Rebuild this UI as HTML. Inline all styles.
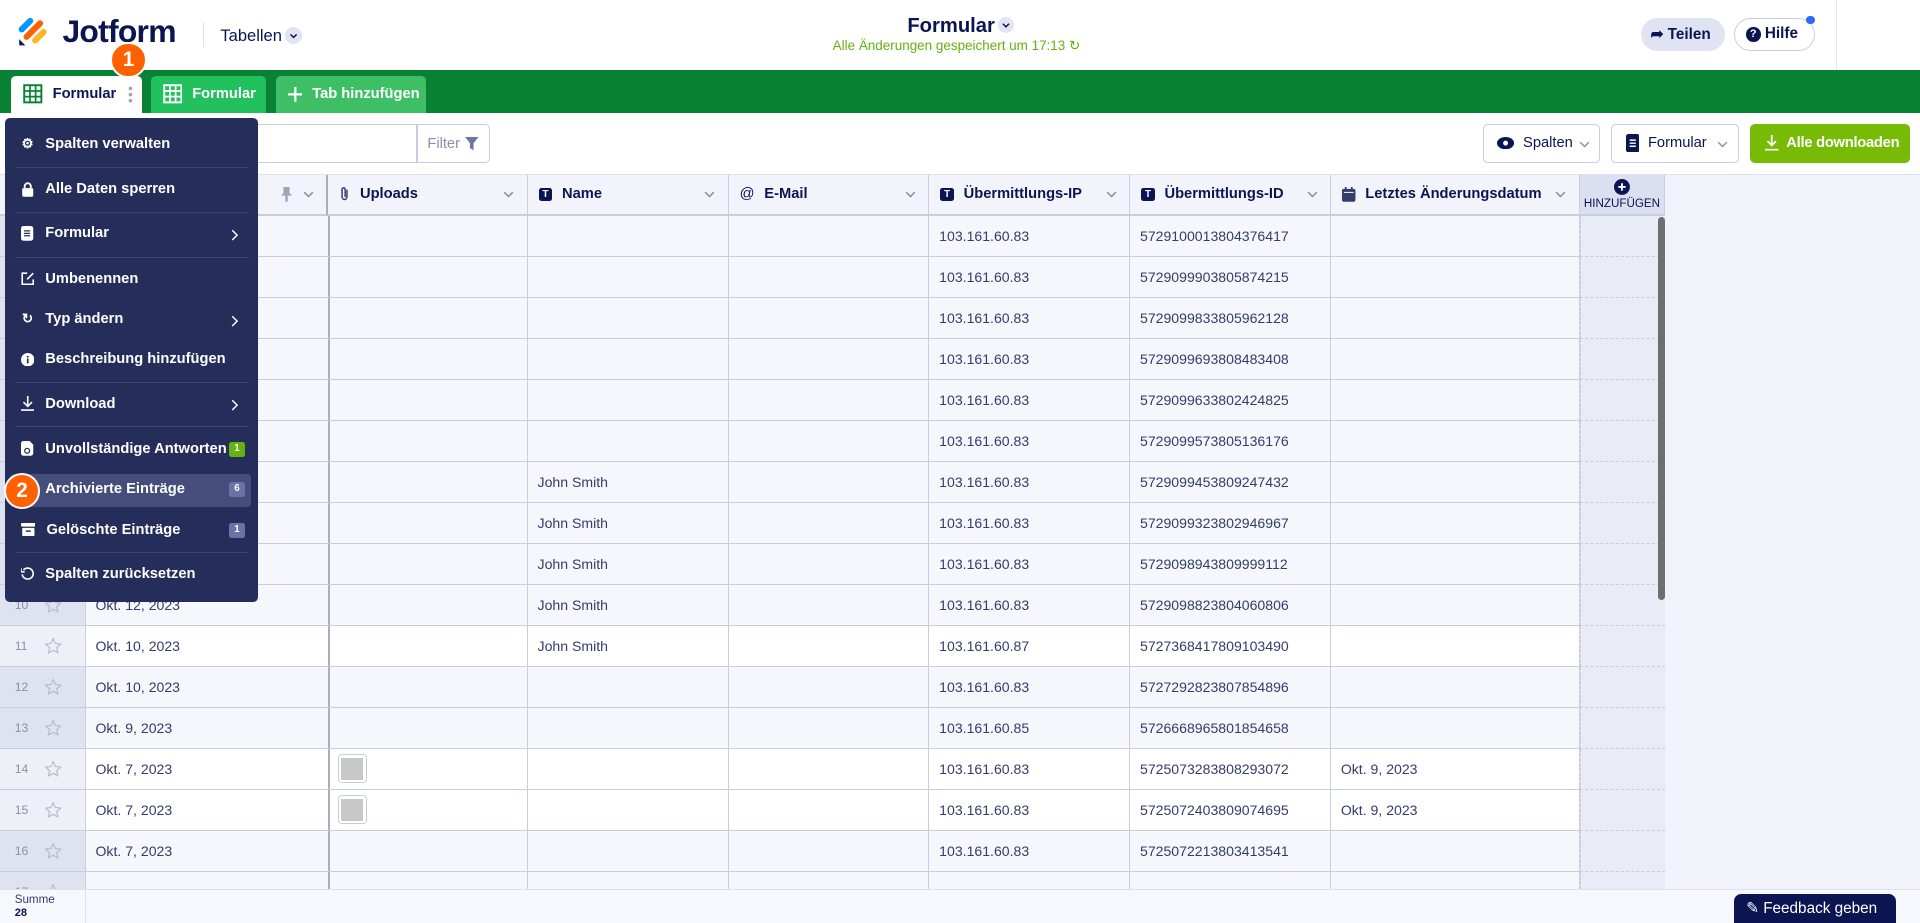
<!DOCTYPE html>
<html><head><meta charset="utf-8"><style>
*{box-sizing:border-box;margin:0;padding:0}
html,body{width:1920px;height:923px;overflow:hidden;background:#fff}
#w{zoom:1.2245;width:1568px;height:754px;position:relative;font-family:"Liberation Sans",sans-serif;color:#0a1551;overflow:hidden}
.a{position:absolute}
.hdr{left:0;top:0;width:1568px;height:57px;background:#fff}
.green{left:0;top:57px;width:1568px;height:35px;background:#0a8236}
.tab{top:62px;height:30px;border-radius:4px 4px 0 0;font-size:12px;font-weight:bold;display:flex;align-items:center;padding-left:10px;gap:8px;white-space:nowrap}
.tb{top:92px;left:0;width:1568px;height:51px;background:#fff;border-bottom:1px solid #dfe2ee}
.btn{top:101px;height:32px;border:1px solid #c8cce0;border-radius:4px;background:#fff;display:flex;align-items:center;font-size:12px;gap:7px;padding-left:11px;white-space:nowrap}
.grid{left:0;top:143px;width:1568px;height:583px;background:#f1f2fa}
.th{position:absolute;top:143px;height:33px;background:#f3f4fb;border-right:1px solid #c9cede;border-bottom:2px solid #c9cede;font-size:12px;font-weight:bold;display:flex;align-items:center;padding-left:9px;gap:8px;white-space:nowrap}
.th .cv{position:absolute;right:10px;top:13px}
.row{position:absolute;left:0;width:1290px;height:33.5px;border-bottom:1px solid #c9cede}
.c{position:absolute;top:0;height:100%;border-right:1px solid #c9cede;font-size:11.5px;color:#343c6a;display:flex;align-items:center;padding-left:8px}
.menu{left:4px;top:96px;width:207px;height:396px;background:#252d5b;border-radius:4px;color:#fff}
.mi{position:absolute;left:13px;font-size:12px;font-weight:bold;display:flex;align-items:center;gap:9px;white-space:nowrap}
.sep{position:absolute;left:8px;width:191px;height:1px;background:#3d4573}
.arr{position:absolute;right:16px}
.bdg{position:absolute;right:11px;width:13px;height:12px;border-radius:2px;font-size:8px;font-weight:bold;text-align:center;line-height:12px;background:#6b72a6}
.num{border-radius:50%;background:#ff6100;color:#fff;border:2px solid #fff;font-weight:bold;text-align:center}
.ic{width:11px;text-align:center;font-size:11px}
</style></head><body><div id="w">
<div class="a hdr"></div>
<svg class="a" style="left:15px;top:13px" width="26" height="26" viewBox="0 0 26 26">
<line x1="3" y1="11" x2="10" y2="4" stroke="#0099ff" stroke-width="5" stroke-linecap="round"/>
<line x1="7" y1="17" x2="18" y2="6" stroke="#ff6100" stroke-width="5" stroke-linecap="round"/>
<line x1="14" y1="20" x2="21" y2="13" stroke="#ffb629" stroke-width="5" stroke-linecap="round"/>
<path d="M1 19 L6 24 L1 24Z" fill="#0a1551"/></svg>
<div class="a" style="left:51px;top:11px;font-size:26px;font-weight:bold;letter-spacing:-0.6px">Jotform</div>
<div class="a" style="left:166px;top:18px;width:1px;height:20px;background:#dfe2ee"></div>
<div class="a" style="left:180px;top:21px;font-size:13.5px">Tabellen</div>
<svg class="a" style="left:233px;top:22px" width="14" height="14"><circle cx="7" cy="7" r="7" fill="#e2e4f2"/><path d="M4.5 6L7 8.5 9.5 6" fill="none" stroke="#0a1551" stroke-width="1.2"/></svg>
<div class="a" style="left:741px;top:12px;font-size:16.5px;font-weight:bold">Formular</div>
<svg class="a" style="left:815px;top:14px" width="13" height="13"><circle cx="6.5" cy="6.5" r="6.5" fill="#e2e4f2"/><path d="M4 5.5L6.5 8 9 5.5" fill="none" stroke="#0a1551" stroke-width="1.2"/></svg>
<div class="a" style="left:680px;top:31px;font-size:11px;color:#64b20f">Alle Änderungen gespeichert um 17:13 ↻</div>
<div class="a" style="left:1340px;top:15px;width:69px;height:27px;border-radius:14px;background:#dfe3f2;font-size:12.5px;font-weight:bold;line-height:27px;padding-left:8px">➦ Teilen</div>
<div class="a" style="left:1416px;top:15px;width:66px;height:27px;border-radius:14px;border:1px solid #c8cce0;font-size:12.5px;font-weight:bold;line-height:25px;padding-left:9px"><span style="display:inline-block;width:12px;height:12px;border-radius:50%;background:#0a1551;color:#fff;font-size:9px;text-align:center;line-height:12px;vertical-align:1px">?</span> Hilfe</div>
<div class="a" style="left:1475px;top:13px;width:7px;height:7px;border-radius:50%;background:#2e69ff"></div>
<div class="a" style="left:1499px;top:0;width:1px;height:57px;background:#e3e5ef"></div>

<div class="a green"></div>
<div class="a tab" style="left:9px;width:107px;background:#fff;color:#0a1551"><svg width="16" height="16"><rect x="1" y="1" width="14" height="14" fill="none" stroke="#0a8236" stroke-width="1.6"/><path d="M1 5.7H15M1 10.3H15M5.7 1V15M10.3 1V15" stroke="#0a8236" stroke-width="1.4"/></svg>Formular<svg width="4" height="14" style="margin-left:2px"><circle cx="2" cy="2" r="1.5" fill="#a0a4b8"/><circle cx="2" cy="7" r="1.5" fill="#a0a4b8"/><circle cx="2" cy="12" r="1.5" fill="#a0a4b8"/></svg></div>
<div class="a tab" style="left:123px;width:94px;background:#22c15e;color:#fff"><svg width="16" height="16"><rect x="1" y="1" width="14" height="14" fill="none" stroke="#fff" stroke-width="1.6"/><path d="M1 5.7H15M1 10.3H15M5.7 1V15M10.3 1V15" stroke="#fff" stroke-width="1.4"/></svg>Formular</div>
<div class="a tab" style="left:225px;width:123px;background:#3ebf66;color:#fff"><svg width="12" height="12"><path d="M6 0V12M0 6H12" stroke="#fff" stroke-width="1.8"/></svg>Tab hinzufügen</div>
<div class="a num" style="left:90px;top:34px;width:30px;height:30px;font-size:17px;line-height:26px">1</div>

<div class="a tb"></div>
<div class="a" style="left:200px;top:101px;width:200px;height:32px;border:1px solid #c8cce0;border-radius:4px"></div>
<div class="a" style="left:340px;top:101px;width:1px;height:32px;background:#c8cce0"></div>
<div class="a" style="left:349px;top:111px;font-size:12px;color:#8b90a8">Filter</div>
<svg class="a" style="left:380px;top:112px" width="11" height="11"><path d="M0 0H11L7 5V11L4 9V5Z" fill="#6f76a7"/></svg>
<div class="a btn" style="left:1211px;width:96px"><svg width="14" height="10"><ellipse cx="7" cy="5" rx="7" ry="5" fill="#0a1551"/><circle cx="7" cy="5" r="2" fill="#fff"/></svg>Spalten<svg style="position:absolute;right:8px;top:13px" width="9" height="6"><path d="M1 1L4.5 4.5 8 1" fill="none" stroke="#8b90a8" stroke-width="1.2"/></svg></div>
<div class="a btn" style="left:1316px;width:104px"><svg width="11" height="15"><rect width="11" height="15" rx="2" fill="#0a1551"/><path d="M3 5H8M3 7.5H8M3 10H8" stroke="#fff" stroke-width="1.2"/></svg>Formular<svg style="position:absolute;right:8px;top:13px" width="9" height="6"><path d="M1 1L4.5 4.5 8 1" fill="none" stroke="#8b90a8" stroke-width="1.2"/></svg></div>
<div class="a btn" style="left:1429px;width:131px;background:#78bb07;border-color:#78bb07;color:#fff;font-size:12px;font-weight:bold;padding-left:12px;gap:6px;letter-spacing:-0.2px"><svg width="11" height="13"><path d="M5.5 0V8M2 5L5.5 8.5 9 5M0 12H11" fill="none" stroke="#fff" stroke-width="1.4"/></svg>Alle downloaden</div>

<div class="a grid"></div>
<svg width="0" height="0" style="position:absolute"><defs><symbol id="cv" viewBox="0 0 9 6"><path d="M1 1L4.5 4.5 8 1" fill="none" stroke="#8b90a8" stroke-width="1.3"/></symbol></defs></svg>
<div class="th" style="left:0;width:268px;border-right:2px solid #a8adc0"><svg class="cv" width="9" height="6"><use href="#cv"/></svg><svg style="position:absolute;right:28px;top:10px" width="9" height="12"><path d="M2 0H7V5L9 7H5.5V12H3.5V7H0L2 5Z" fill="#a0a4b8"/></svg></div>
<div class="th" style="left:268px;width:163px"><svg width="9" height="13"><path d="M6.5 3V9A2 2 0 0 1 2.5 9V2.5A1.3 1.3 0 0 1 5 2.5V9" fill="none" stroke="#343c6a" stroke-width="1.2"/></svg>Uploads<svg class="cv" width="9" height="6"><use href="#cv"/></svg></div>
<div class="th" style="left:431px;width:164px"><span style="background:#0a1551;color:#fff;font-size:8px;width:11px;height:11px;text-align:center;line-height:11px;border-radius:2px">T</span>Name<svg class="cv" width="9" height="6"><use href="#cv"/></svg></div>
<div class="th" style="left:595px;width:164px"><span style="font-weight:normal">@</span>E-Mail<svg class="cv" width="9" height="6"><use href="#cv"/></svg></div>
<div class="th" style="left:759px;width:164px"><span style="background:#0a1551;color:#fff;font-size:8px;width:11px;height:11px;text-align:center;line-height:11px;border-radius:2px">T</span>Übermittlungs-IP<svg class="cv" width="9" height="6"><use href="#cv"/></svg></div>
<div class="th" style="left:923px;width:164px"><span style="background:#0a1551;color:#fff;font-size:8px;width:11px;height:11px;text-align:center;line-height:11px;border-radius:2px">T</span>Übermittlungs-ID<svg class="cv" width="9" height="6"><use href="#cv"/></svg></div>
<div class="th" style="left:1087px;width:203px"><svg width="11" height="12"><rect y="1.5" width="11" height="10.5" rx="1.5" fill="#343c6a"/><path d="M3 0V3M8 0V3" stroke="#343c6a" stroke-width="1.4"/><rect x="1.5" y="4" width="8" height="0.8" fill="#fff"/></svg>Letztes Änderungsdatum<svg class="cv" width="9" height="6"><use href="#cv"/></svg></div>
<div class="th" style="left:1290px;width:70px;background:#dcdff0;flex-direction:column;justify-content:center;padding:0;gap:2px;font-weight:normal;font-size:9.5px"><svg width="13" height="13"><circle cx="6.5" cy="6.5" r="6.5" fill="#0a1551"/><path d="M6.5 3.5V9.5M3.5 6.5H9.5" stroke="#fff" stroke-width="1.5"/></svg>HINZUFÜGEN</div>

<div id="rows"></div>
<script>
var ips=["103.161.60.83","103.161.60.83","103.161.60.83","103.161.60.83","103.161.60.83","103.161.60.83","103.161.60.83","103.161.60.83","103.161.60.83","103.161.60.83","103.161.60.87","103.161.60.83","103.161.60.85","103.161.60.83","103.161.60.83","103.161.60.83",""];
var ids=["5729100013804376417","5729099903805874215","5729099833805962128","5729099693808483408","5729099633802424825","5729099573805136176","5729099453809247432","5729099323802946967","5729098943809999112","5729098823804060806","5727368417809103490","5727292823807854896","5726668965801854658","5725073283808293072","5725072403809074695","5725072213803413541",""];
var dates=["","","","","","","","","","Okt. 12, 2023","Okt. 10, 2023","Okt. 10, 2023","Okt. 9, 2023","Okt. 7, 2023","Okt. 7, 2023","Okt. 7, 2023",""];
var star='<svg style="position:absolute;left:36px;top:9px" width="15" height="15" viewBox="0 0 24 24"><path d="M12 2l2.9 6.6 7.1.6-5.4 4.7 1.6 7L12 17.3 5.8 21l1.6-7L2 9.2l7.1-.6z" fill="none" stroke="#b5b9cc" stroke-width="1.5" stroke-linejoin="round"/></svg>';
var h="";
for(var i=0;i<17;i++){var y=176+i*33.5;var white=(i==10||i==13||i==14);
var bg=white?"#fff":"#f5f7fd";var nb=white?"#eef0f8":"#dfe3ef";
var nm=(i>=6&&i<=10)?"John Smith":"";var up=(i==13||i==14)?'<div style="width:24px;height:24px;border:1px solid #c8cce0;border-radius:3px;padding:2px"><div style="width:18px;height:18px;background:#c8c8c8"></div></div>':"";
var ld=(i==13||i==14)?"Okt. 9, 2023":"";
h+='<div class="row" style="top:'+y+'px;background:'+bg+'">'+
'<div class="c" style="left:0;width:70px;background:'+nb+';color:#8b90a8;font-size:10px;padding-left:12px">'+(i+1)+star+'</div>'+
'<div class="c" style="left:70px;width:198px;border-right:none">'+dates[i]+'</div>'+
'<div class="c" style="left:268px;width:163px;border-left:2px solid #a8adc0;padding-left:6px">'+up+'</div>'+
'<div class="c" style="left:431px;width:164px">'+nm+'</div>'+
'<div class="c" style="left:595px;width:164px"></div>'+
'<div class="c" style="left:759px;width:164px">'+ips[i]+'</div>'+
'<div class="c" style="left:923px;width:164px">'+ids[i]+'</div>'+
'<div class="c" style="left:1087px;width:203px">'+ld+'</div></div>'+
'<div class="a" style="left:1290px;top:'+y+'px;width:70px;height:33.5px;background:#e9ebf6;border-bottom:1px dashed #c9cede;border-left:1px dashed #c9cede"></div>';}
document.getElementById("rows").innerHTML=h;
</script>
<div class="a" style="left:1354px;top:177px;width:6px;height:313px;background:#6e6e6e;border-radius:3px"></div>
<div class="a" style="left:0;top:726px;width:1568px;height:28px;background:#f7f8fd;border-top:1px solid #dfe2ee"></div>
<div class="a" style="left:0;top:726px;width:70px;height:28px;border-right:1px solid #dfe2ee"></div>
<div class="a" style="left:12px;top:729px;font-size:9.5px;color:#343c6a">Summe</div>
<div class="a" style="left:12px;top:741px;font-size:9px;font-weight:bold">28</div>
<div class="a" style="left:1416px;top:730px;width:132px;height:26px;border-radius:6px 6px 0 0;background:#0a1551;color:#fff;font-size:12.5px;line-height:24px;padding-left:10px">✎ Feedback geben</div>

<div class="a menu">
<div class="mi" style="top:15px"><span class="ic">⚙</span>Spalten verwalten</div>
<div class="sep" style="top:40px"></div>
<div class="mi" style="top:52px"><svg class="ic" width="11" height="12"><rect x="1" y="5" width="9" height="7" rx="1" fill="#fff"/><path d="M3 5V3.5a2.5 2.5 0 0 1 5 0V5" fill="none" stroke="#fff" stroke-width="1.5"/></svg>Alle Daten sperren</div>
<div class="sep" style="top:77px"></div>
<div class="mi" style="top:88px"><svg width="11" height="12"><rect width="10" height="12" rx="2" fill="#fff"/><path d="M2.5 4H7.5M2.5 6H7.5M2.5 8H7.5" stroke="#252d5b" stroke-width="1"/></svg>Formular</div><svg class="arr" style="top:91px" width="6" height="10"><path d="M1 1L5 5 1 9" fill="none" stroke="#fff" stroke-width="1.2"/></svg>
<div class="sep" style="top:114px"></div>
<div class="mi" style="top:125px"><svg width="11" height="11"><path d="M5 1H1V10H10V6M5 6L10 1" fill="none" stroke="#fff" stroke-width="1.3"/></svg>Umbenennen</div>
<div class="mi" style="top:158px"><span class="ic">↻</span>Typ ändern</div><svg class="arr" style="top:161px" width="6" height="10"><path d="M1 1L5 5 1 9" fill="none" stroke="#fff" stroke-width="1.2"/></svg>
<div class="mi" style="top:191px"><svg width="11" height="11"><circle cx="5.5" cy="5.5" r="5.5" fill="#fff"/><rect x="4.8" y="4.5" width="1.4" height="4" fill="#252d5b"/><circle cx="5.5" cy="3" r="0.8" fill="#252d5b"/></svg>Beschreibung hinzufügen</div>
<div class="sep" style="top:216px"></div>
<div class="mi" style="top:227px"><svg width="11" height="12"><path d="M5.5 0V8M2 5L5.5 8.5 9 5M0 11.5H11" fill="none" stroke="#fff" stroke-width="1.3"/></svg>Download</div><svg class="arr" style="top:230px" width="6" height="10"><path d="M1 1L5 5 1 9" fill="none" stroke="#fff" stroke-width="1.2"/></svg>
<div class="sep" style="top:252px"></div>
<div class="mi" style="top:264px"><svg width="11" height="12"><path d="M0 2A2 2 0 0 1 2 0H7L10 3V10A2 2 0 0 1 8 12H2A2 2 0 0 1 0 10Z" fill="#fff"/><circle cx="5" cy="8" r="2" fill="none" stroke="#252d5b" stroke-width="1"/></svg>Unvollständige Antworten</div><div class="bdg" style="top:265px;background:#64b20f">1</div>
<div class="a" style="left:4px;top:291px;width:197px;height:27px;background:#454d7d;border-radius:3px"></div>
<div class="mi" style="top:297px"><span class="ic"></span>Archivierte Einträge</div><div class="bdg" style="top:298px">6</div>
<div class="mi" style="top:330px"><svg width="12" height="11"><rect width="12" height="3" rx="1" fill="#fff"/><rect x="1" y="4" width="10" height="7" rx="1" fill="#fff"/><rect x="4" y="6" width="4" height="1.2" fill="#252d5b"/></svg>Gelöschte Einträge</div><div class="bdg" style="top:331px">1</div>
<div class="sep" style="top:355px"></div>
<div class="mi" style="top:366px"><svg width="11" height="11"><path d="M2 2.5A4.5 4.5 0 1 1 1 6" fill="none" stroke="#fff" stroke-width="1.3"/><path d="M0 1V4H3" fill="none" stroke="#fff" stroke-width="1.2"/></svg>Spalten zurücksetzen</div>
</div>
<div class="a num" style="left:3px;top:386px;width:30px;height:30px;font-size:17px;line-height:26px">2</div>
</div></body></html>
